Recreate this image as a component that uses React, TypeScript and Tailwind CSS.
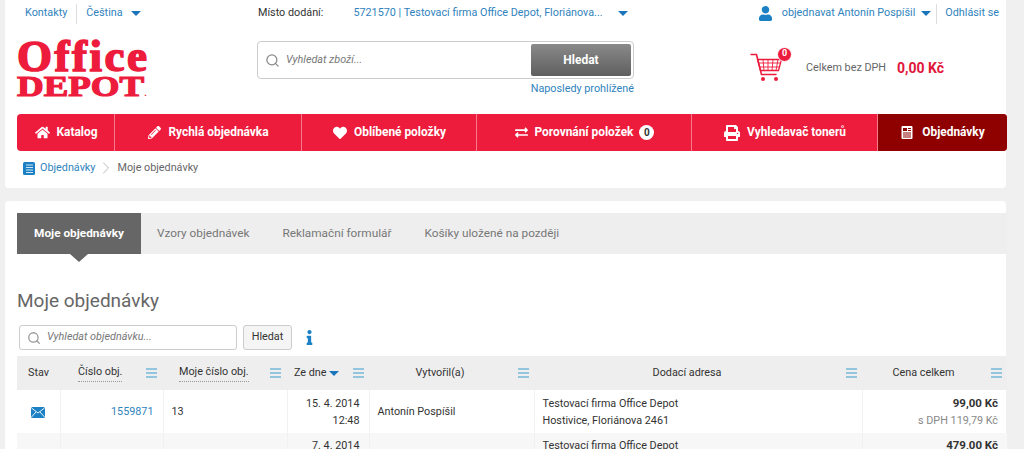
import { Search, ChevronRight } from "lucide-react";
import { FaHome, FaPencilAlt, FaHeart, FaExchangeAlt, FaPrint, FaUser, FaInfo } from "react-icons/fa";

const Caret = ({ className = "" }: { className?: string }) => (
  <span className={`inline-block w-0 h-0 border-x-[5px] border-x-transparent border-t-[5px] border-t-[#1b75bb] ${className}`} />
);

const Menu = () => (
  <svg width="11" height="10" viewBox="0 0 11 10" className="shrink-0">
    <path d="M0 1h11M0 5h11M0 9h11" stroke="#3a9bd0" strokeWidth="1.2" />
  </svg>
);

const DocIcon = () => (
  <svg width="12" height="13" viewBox="0 0 12 13">
    <rect x="0.5" y="0" width="11" height="13" rx="1" fill="#fff" />
    <path d="M2 2h4v3H2z" fill="#8f0000" />
    <path d="M7 2.5h3M7 4.5h3M2 7h8M2 9h8M2 11h8" stroke="#8f0000" strokeWidth="1" />
  </svg>
);

const BookIcon = () => (
  <svg width="12" height="13" viewBox="0 0 12 13">
    <rect x="0" y="0" width="12" height="13" rx="1.5" fill="#1b80c4" />
    <path d="M3 3h7M3 5.5h7M3 8h7M3 10.5h7" stroke="#cfe6f5" strokeWidth="1" />
  </svg>
);

const Mail = () => (
  <svg width="14" height="11" viewBox="0 0 14 11" className="inline">
    <rect width="14" height="11" rx="1.5" fill="#1b80c4" />
    <path d="M0.5 1l6.5 5 6.5-5M0.5 10l4.5-5M13.5 10l-4.5-5" stroke="#fff" strokeWidth="0.9" fill="none" />
  </svg>
);

const Cart = () => (
  <svg width="34" height="34" viewBox="0 0 34 34" fill="none" stroke="#ed1b3c">
    <path d="M0.5 4.5h6l5 20h15" strokeWidth="1.6" />
    <path d="M7.5 9.5h24l-3 11h-18z" strokeWidth="1.3" />
    <path d="M8.5 13h22M9.5 17h20M13 9.5l1 11M18 9.5v11M23 9.5l-1 11M28 9.5l-2 11" strokeWidth="0.9" />
    <circle cx="13" cy="29" r="2" fill="#ed1b3c" stroke="none" />
    <circle cx="26" cy="29" r="2" fill="#ed1b3c" stroke="none" />
  </svg>
);

const navItems = [
  { name: "Katalog", icon: <FaHome size={15} />, w: "w-[98px]" },
  { name: "Rychlá objednávka", icon: <FaPencilAlt size={13} />, w: "w-[187px]" },
  { name: "Oblíbené položky", icon: <FaHeart size={14} />, w: "w-[175px]" },
  { name: "Porovnání položek", icon: <FaExchangeAlt size={13} />, w: "w-[215px]", badge: true },
  { name: "Vyhledavač tonerů", icon: <FaPrint size={16} />, w: "w-[186px]" },
];

export default function App() {
  return (
    <div className="h-[449px] overflow-hidden bg-[#f0f0f0] pl-[5px] pr-[18px] text-[10.8px] text-[#333] font-['Roboto',sans-serif]">
      <div className="bg-white h-[188px] rounded-b-sm pl-3">
        {/* Top bar */}
        <div className="flex items-center w-[990px] h-[27px] text-[#2f83bd]">
          <div className="w-[241px] flex items-center pl-2">
            <span>Kontakty</span>
            <span className="w-px h-5 bg-[#ddd] mx-[9px]" />
            <span>Čeština</span>
            <Caret className="ml-[8px]" />
          </div>
          <span className="text-[#333]">Místo dodání:</span>
          <span className="ml-[30px]">5721570 | Testovací firma Office Depot, Floriánova...</span>
          <Caret className="ml-[15px]" />
          <div className="ml-auto flex items-center pr-[8px]">
            <FaUser size={15} className="text-[#1b80c4] mr-[9px]" />
            <span>objednavat Antonín Pospíšil</span>
            <Caret className="ml-[6px]" />
            <span className="w-px h-5 bg-[#ddd] ml-[5px] mr-[8px]" />
            <span>Odhlásit se</span>
          </div>
        </div>

        {/* Logo, search, cart */}
        <div className="flex w-[990px] h-[87px]">
          <div className="w-[240px] pt-[12px] text-[#ed1b3c] font-['Liberation_Serif',serif] font-bold">
            <div className="text-[45px] leading-[35px] tracking-[2.5px] [-webkit-text-stroke:1.6px_#ed1b3c]">Office</div>
            <div className="mt-[1px] text-[30px] leading-[21px] origin-left scale-x-[1.23] [-webkit-text-stroke:1.2px_#ed1b3c]">
              DEPOT<span className="text-[8px] [-webkit-text-stroke:0px]">.</span>
            </div>
          </div>
          <div className="w-[377px] pt-[14px]">
            <div className="flex items-center h-[38px] border border-[#ccc] rounded-[4px] pl-[7px] pr-[2px] py-[2px]">
              <Search size={15} className="text-[#888]" strokeWidth={2} />
              <span className="ml-[6px] italic text-[#777]">Vyhledat zboží...</span>
              <div className="ml-auto w-[100px] h-full rounded-[2px] bg-gradient-to-b from-[#8a8a8a] to-[#5f5f5f] text-white font-bold text-[12px] flex items-center justify-center">
                Hledat
              </div>
            </div>
            <div className="text-right text-[#2f83bd] mt-[2px]">Naposledy prohlížené</div>
          </div>
          <div className="flex items-center pl-[116px] pb-[4px]">
            <div className="relative mb-[4px]">
              <Cart />
              <span className="absolute -top-[3px] right-[-8px] w-[15px] h-[15px] rounded-full bg-[#ed1b3c] border border-white text-white text-[9px] font-bold flex items-center justify-center">0</span>
            </div>
            <span className="ml-[22px] text-[#666]">Celkem bez DPH</span>
            <span className="ml-[11px] text-[#e0173a] font-bold text-[14px]">0,00 Kč</span>
          </div>
        </div>

        {/* Main nav */}
        <nav className="flex w-[990px] h-[37px] rounded-[4px] overflow-hidden bg-[#ed1b3c] text-white font-bold text-[11.9px]">
          {navItems.map((item) => (
            <div key={item.name} className={`${item.w} flex items-center justify-center gap-[6px] pl-[1px] border-r border-[#f47a8c]`}>
              <span className="mr-[1px]">{item.icon}</span>
              <span>{item.name}</span>
              {item.badge && (
                <span className="w-[15px] h-[15px] rounded-full bg-white text-[#333] text-[10px] flex items-center justify-center">0</span>
              )}
            </div>
          ))}
          <div className="flex-1 flex items-center justify-center gap-[9px] pl-[1px] bg-[#8f0000]">
            <DocIcon />
            <span>Objednávky</span>
          </div>
        </nav>

        {/* Breadcrumb */}
        <div className="flex items-center h-[34px] pl-[6px] text-[#666]">
          <BookIcon />
          <span className="ml-[5px] text-[#2f83bd]">Objednávky</span>
          <ChevronRight size={20} strokeWidth={1} className="text-[#aaa] mx-[1px]" />
          <span>Moje objednávky</span>
        </div>
      </div>

      {/* Content panel */}
      <div className="bg-white mt-[13px] h-[260px] rounded-t-sm pl-3 pt-[12px]">
        <div className="flex w-[990px] h-[41px] bg-[#eee] text-[#777] text-[11.8px]">
          <div className="relative w-[124px] bg-[#666] text-white font-bold flex items-center justify-center">
            Moje objednávky
            <span className="absolute top-full left-[53px] w-0 h-0 border-x-[9px] border-x-transparent border-t-[8px] border-t-[#666]" />
          </div>
          <div className="flex items-center pl-[16px] gap-[33px]">
            <span>Vzory objednávek</span>
            <span>Reklamační formulář</span>
            <span>Košíky uložené na později</span>
          </div>
        </div>

        <h1 className="mt-[35px] text-[19px] leading-[24px] text-[#666]">Moje objednávky</h1>

        <div className="flex items-center mt-[12px] ml-[2px]">
          <div className="flex items-center w-[218px] h-[25px] border border-[#ccc] rounded-[3px] pl-[7px]">
            <Search size={14} className="text-[#999]" strokeWidth={2.2} />
            <span className="ml-[6px] italic text-[#777]">Vyhledat objednávku...</span>
          </div>
          <div className="ml-[6px] w-[49px] h-[25px] border border-[#ccc] rounded-[3px] bg-[#f5f5f5] flex items-center justify-center">Hledat</div>
          <FaInfo size={15} className="ml-[10px] text-[#1b80c4]" />
        </div>

        <table className="mt-[6px] w-[990px] table-fixed border-collapse">
          <colgroup>
            <col className="w-[43px]" />
            <col className="w-[103px]" />
            <col className="w-[124px]" />
            <col className="w-[82px]" />
            <col className="w-[165px]" />
            <col className="w-[328px]" />
            <col className="w-[145px]" />
          </colgroup>
          <thead>
            <tr className="h-[34px] bg-[#eee] text-[#333] font-normal">
              <th className="font-normal text-center">Stav</th>
              <th className="font-normal">
                <div className="flex items-center pl-[18px] pr-[6px]"><span className="border-b border-dotted border-[#999]">Číslo obj.</span><span className="ml-auto"><Menu /></span></div>
              </th>
              <th className="font-normal">
                <div className="flex items-center pl-[16px] pr-[6px]"><span className="border-b border-dotted border-[#999]">Moje číslo obj.</span><span className="ml-auto"><Menu /></span></div>
              </th>
              <th className="font-normal">
                <div className="flex items-center pl-[7px] pr-[5px]"><span>Ze dne</span><Caret className="ml-[2px]" /><span className="ml-auto"><Menu /></span></div>
              </th>
              <th className="font-normal">
                <div className="flex items-center pr-[5px]"><span className="flex-1 text-center pr-[7px]">Vytvořil(a)</span><Menu /></div>
              </th>
              <th className="font-normal">
                <div className="flex items-center pr-[5px]"><span className="flex-1 text-center pr-[6px]">Dodací adresa</span><Menu /></div>
              </th>
              <th className="font-normal">
                <div className="flex items-center pr-[5px]"><span className="flex-1 text-center pr-[6px]">Cena celkem</span><Menu /></div>
              </th>
            </tr>
          </thead>
          <tbody className="leading-[17px]">
            <tr className="h-[43px]">
              <td className="border-r border-[#f1f1f1] text-center"><Mail /></td>
              <td className="border-r border-[#f1f1f1] text-right pr-[9px] text-[#2f83bd]">1559871</td>
              <td className="border-r border-[#f1f1f1] pl-[8px]">13</td>
              <td className="border-r border-[#f1f1f1] text-right pr-[9px]">15. 4. 2014<br />12:48</td>
              <td className="border-r border-[#f1f1f1] pl-[8px]">Antonín Pospíšil</td>
              <td className="border-r border-[#f1f1f1] pl-[8px]">Testovací firma Office Depot<br />Hostivice, Floriánova 2461</td>
              <td className="text-right pr-[9px]"><b className="text-[11.5px]">99,00 Kč</b><br /><span className="text-[#888]">s DPH 119,79 Kč</span></td>
            </tr>
            <tr className="h-[43px] bg-[#f7f7f7] align-top">
              <td className="border-r border-[#f1f1f1]" />
              <td className="border-r border-[#f1f1f1]" />
              <td className="border-r border-[#f1f1f1]" />
              <td className="border-r border-[#f1f1f1] text-right pr-[9px] pt-[4px]">7. 4. 2014</td>
              <td className="border-r border-[#f1f1f1]" />
              <td className="border-r border-[#f1f1f1] pl-[8px] pt-[4px]">Testovací firma Office Depot</td>
              <td className="text-right pr-[9px] pt-[4px]"><b className="text-[11.5px]">479,00 Kč</b></td>
            </tr>
          </tbody>
        </table>
      </div>
    </div>
  );
}
